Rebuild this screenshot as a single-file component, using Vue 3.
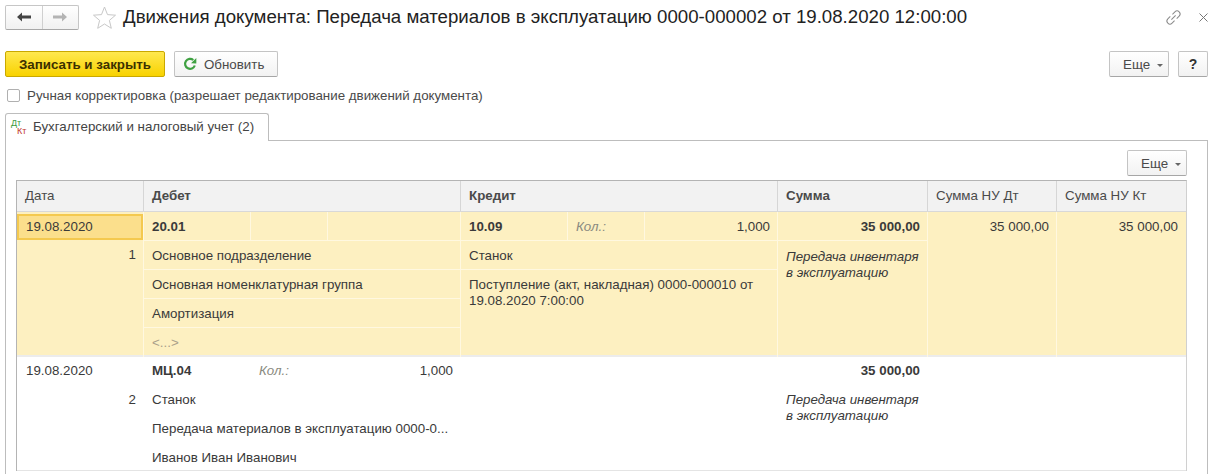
<script setup>
const columnHeads = [
  { label: 'Дата' },
  { label: 'Дебет', bold: true },
  { label: 'Кредит', bold: true },
  { label: 'Сумма', bold: true },
  { label: 'Сумма НУ Дт' },
  { label: 'Сумма НУ Кт' }
]
const debitOne = ['Основное подразделение', 'Основная номенклатурная группа', 'Амортизация']
const debitTwo = ['Станок', 'Передача материалов в эксплуатацию 0000-0...', 'Иванов Иван Иванович']
</script>

<template>
  <div class="page">
    <header class="titlebar">
      <div class="nav">
        <button class="nav-btn">
          <svg width="16" height="12" viewBox="0 0 16 12"><path d="M1 6l5-4.500v3h9v3H6v3z" fill="#444" /></svg>
        </button>
        <button class="nav-btn">
          <svg width="16" height="12" viewBox="0 0 16 12"><path d="M15 6l-5-4.500v3H1v3h9v3z" fill="#b4b4b4" /></svg>
        </button>
      </div>
      <svg class="star" width="25" height="25" viewBox="0 0 25 25">
        <path d="M12.500 2l3 7.600 8 .6-6.100 5.200 1.900 7.900-6.800-4.300-6.800 4.300 1.900-7.900L1.500 10.200l8-.6z" fill="#fff" stroke="#c8c8c8" />
      </svg>
      <h1 class="title">Движения документа: Передача материалов в эксплуатацию 0000-000002 от 19.08.2020 12:00:00</h1>
      <div class="window-tools">
        <svg width="17" height="17" viewBox="0 0 17 17" fill="none" stroke="#8a8a8a" stroke-width="1">
          <g transform="rotate(-45 8.500 8.500)">
            <path d="M7 5.500H3.500a3 3 0 0 0 0 6H7" />
            <path d="M10 5.500h3.500a3 3 0 0 1 0 6H10" />
            <path d="M5.500 8.500h6" />
          </g>
        </svg>
        <svg width="9" height="9" viewBox="0 0 9 9" stroke="#777" stroke-width="1"><path d="M.5.500l8 8M8.500.500l-8 8" /></svg>
      </div>
    </header>

    <div class="toolbar">
      <button class="btn primary">Записать и закрыть</button>
      <button class="btn refresh">
        <svg width="14" height="14" viewBox="0 0 14 14" fill="none">
          <path d="M11.800 8.500A5 5 0 1 1 10.300 3" stroke="#3fa142" stroke-width="2.200" />
          <path d="M8 6.200L13.300 6.400V1z" fill="#3fa142" />
        </svg>
        Обновить
      </button>
      <span class="spacer"></span>
      <button class="btn more">Еще <i class="caret"></i></button>
      <button class="btn help">?</button>
    </div>

    <label class="manual">
      <span class="checkbox"></span>
      Ручная корректировка (разрешает редактирование движений документа)
    </label>

    <div class="tabs">
      <div class="tab">
        <span class="dtkt"><b class="dt">Дт</b><b class="kt">Кт</b></span>
        Бухгалтерский и налоговый учет (2)
      </div>
    </div>

    <section class="panel">
      <div class="panel-tools">
        <button class="btn more">Еще <i class="caret"></i></button>
      </div>

      <div class="table">
        <div class="row head">
          <div v-for="c in columnHeads" :key="c.label" class="head-cell" :class="{ bold: c.bold }">{{ c.label }}</div>
        </div>

        <div class="row record selected">
          <div class="col">
            <div class="line date-active">19.08.2020</div>
            <div class="line num">1</div>
          </div>
          <div class="col">
            <div class="line split ruled">
              <b class="part-a">20.01</b><span class="part-b"></span><span class="part-c"></span>
            </div>
            <div v-for="d in debitOne" :key="d" class="line ruled">{{ d }}</div>
            <div class="line muted">&lt;...&gt;</div>
          </div>
          <div class="col">
            <div class="line split ruled">
              <b class="part-a">10.09</b><em class="part-b">Кол.:</em><span class="part-c right">1,000</span>
            </div>
            <div class="line ruled">Станок</div>
            <div class="line wrap">Поступление (акт, накладная) 0000-000010 от 19.08.2020 7:00:00</div>
          </div>
          <div class="col">
            <div class="line right ruled"><b>35 000,00</b></div>
            <div class="line wrap note">Передача инвентаря в эксплуатацию</div>
          </div>
          <div class="col"><div class="line right">35 000,00</div></div>
          <div class="col"><div class="line right last">35 000,00</div></div>
        </div>

        <div class="row record plain">
          <div class="col">
            <div class="line date">19.08.2020</div>
            <div class="line num">2</div>
          </div>
          <div class="col">
            <div class="line split">
              <b class="part-a">МЦ.04</b><em class="part-b">Кол.:</em><span class="part-c right">1,000</span>
            </div>
            <div v-for="d in debitTwo" :key="d" class="line">{{ d }}</div>
          </div>
          <div class="col"></div>
          <div class="col">
            <div class="line right"><b>35 000,00</b></div>
            <div class="line wrap note">Передача инвентаря в эксплуатацию</div>
          </div>
          <div class="col"></div>
          <div class="col"></div>
        </div>
      </div>
    </section>
  </div>
</template>

<style>
html, body { margin: 0; background: #fff; overflow: hidden; }
</style>

<style scoped>
.page {
  height: 474px;
  overflow: hidden;
  font: 13.33px/15px "Liberation Sans", Arial, sans-serif;
  color: #3a3a3a;
  padding: 4px 5px 0;
  box-sizing: border-box;
}
button { font: inherit; color: inherit; cursor: default; }

.titlebar { display: flex; align-items: center; height: 26px; }
.nav {
  display: flex;
  width: 74px;
  height: 25px;
  box-sizing: border-box;
  border: 1px solid #c6c6c6;
  border-bottom-color: #a8a8a8;
  border-radius: 2px;
  background: linear-gradient(#fff, #f1f1f1);
}
.nav-btn {
  flex: 1;
  padding: 0;
  border: 0;
  background: none;
  display: flex;
  align-items: center;
  justify-content: center;
}
.nav-btn + .nav-btn { border-left: 1px solid #d0d0d0; }
.star { margin-left: 13px; flex: none; }
.title {
  margin: 0 0 0 6px;
  font-size: 18.67px;
  line-height: 26px;
  font-weight: 400;
  color: #222;
  white-space: nowrap;
}
.window-tools { margin-left: auto; display: flex; align-items: center; gap: 17px; }

.toolbar { display: flex; align-items: center; gap: 9px; margin-top: 21px; height: 26px; }
.btn {
  height: 26px;
  box-sizing: border-box;
  padding: 0;
  border: 1px solid #c4c4c4;
  border-bottom-color: #a6a6a6;
  border-radius: 2px;
  background: linear-gradient(#fff, #f2f2f2);
  display: flex;
  align-items: center;
  justify-content: center;
  color: #4a4a4a;
  white-space: nowrap;
}
.primary {
  width: 160px;
  font-weight: 700;
  color: #3b3000;
  border-color: #c9a800;
  background: linear-gradient(#ffe84f, #f8d200);
}
.refresh { width: 104px; gap: 7px; justify-content: flex-start; padding-left: 8px; }
.spacer { flex: 1; }
.more { width: 60px; gap: 7px; justify-content: flex-start; padding-left: 13px; }
.help { width: 30px; font-weight: 700; font-size: 14px; color: #333; }
.caret {
  width: 0;
  height: 0;
  border: 3px solid transparent;
  border-top-color: #666;
  border-bottom: 0;
  margin-top: 2px;
}

.manual { display: flex; align-items: center; gap: 7px; margin: 10px 0 0 2px; height: 17px; color: #4a4a4a; }
.checkbox {
  width: 13px;
  height: 13px;
  box-sizing: border-box;
  border: 1px solid #b0b0b0;
  border-radius: 2px;
  background: #fff;
}

.tabs { display: flex; margin-top: 9px; height: 28px; position: relative; z-index: 1; }
.tab {
  width: 264px;
  height: 28px;
  box-sizing: border-box;
  border: 1px solid #bdbdbd;
  border-bottom: 0;
  border-radius: 3px 3px 0 0;
  background: #fff;
  display: flex;
  align-items: center;
  gap: 5px;
  padding: 0 0 2px 5px;
  color: #444;
}
.dtkt { position: relative; width: 17px; height: 16px; flex: none; }
.dtkt b { position: absolute; font-size: 9px; line-height: 8px; font-weight: 400; }
.dt { left: 0; top: 0; color: #3c9a3c; }
.kt { left: 6px; top: 8px; color: #c0392b; }

.panel {
  margin-top: -1px;
  height: 340px;
  box-sizing: border-box;
  border: 1px solid #bdbdbd;
  border-bottom: 0;
  padding: 9px 20px 0 10px;
}
.panel-tools { display: flex; justify-content: flex-end; height: 26px; }

.table {
  margin-top: 4px;
  border: 1px solid #b4b4b4;
  border-bottom: 0;
  border-right-color: #d0d0d0;
}
.row {
  display: grid;
  grid-template-columns: 126px 317px 317px 150px 129px 130px;
}
.head { height: 30px; background: #f2f2f2; border-bottom: 1px solid #d8d8d8; }
.head-cell {
  padding: 0 8px;
  line-height: 30px;
  border-left: 1px solid #d6d6d6;
  color: #4a4a4a;
}
.head-cell:first-child { border-left: 0; }
.head-cell.bold { font-weight: 700; }

.record { border-bottom: 2px solid #ececec; }
.selected { height: 143px; background: #fdf0c1; }
.col + .col { border-left: 1px solid transparent; }
.selected .col + .col { border-left-color: #fff8e0; }
.plain { height: 113px; border-bottom: 1px solid #e4e4e4; }
.col { min-width: 0; display: flex; flex-direction: column; }

.line {
  height: 29px;
  flex: none;
  box-sizing: border-box;
  padding: 0 8px;
  line-height: 28px;
  white-space: nowrap;
  overflow: hidden;
}
.selected .line { line-height: 30px; }
.ruled { border-bottom: 1px solid #fff8e0; }
.line.right { text-align: right; padding-right: 7px; }
.line.right.last { padding-right: 8px; }
.muted { color: #aaa08a; }
.date { padding-left: 9px; }
.selected .date-active {
  margin: 2px 0 0 0;
  height: 26px;
  line-height: 22px;
  padding-left: 7px;
  border: 2px solid #f4c94f;
  background: #fbdf8c;
}
.selected .num { margin-top: 1px; line-height: 28px; }
.num { text-align: right; padding-right: 7px; }
.selected .wrap, .wrap { height: auto; white-space: normal; line-height: 16px; padding-top: 7px; }
.note { font-style: italic; }
.selected .note { padding-top: 8px; }
.plain .note { padding-top: 6px; }

.split { display: flex; padding: 0; }
.split b, .split em, .split span { display: block; box-sizing: border-box; padding: 0 8px; height: 28px; }
.split em { color: #8a8a80; }
.split .right { text-align: right; padding-right: 7px; }
.part-a { width: 107px; }
.selected .part-a { width: 106px; }
.part-b { width: 77px; }
.part-c { flex: 1; }
.selected .part-b, .selected .part-c { border-left: 1px solid #fff8e0; }
</style>
